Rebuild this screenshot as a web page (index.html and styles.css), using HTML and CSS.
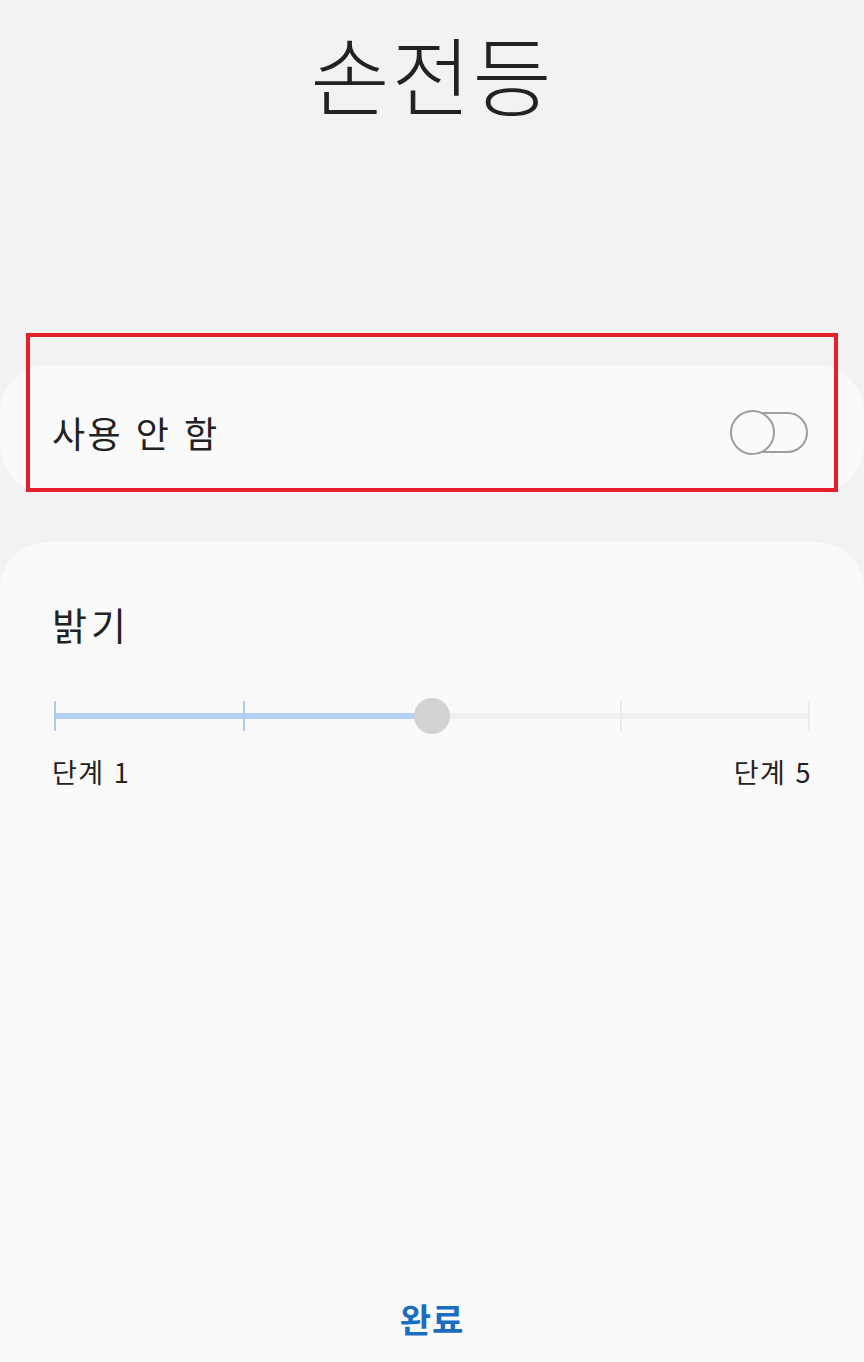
FILE: index.html
```html
<!DOCTYPE html>
<html lang="ko">
<head>
<meta charset="utf-8">
<link rel="stylesheet" href="styles.css">
</head>
<body>
<div class="page">
  <header class="header">
    <h1 class="title">손전등</h1>
  </header>
  <section class="card toggle-card">
    <span class="toggle-label">사용 안 함</span>
    <span class="switch"><span class="knob"></span></span>
  </section>
  <section class="card bright-card">
    <h2 class="bright-title">밝기</h2>
    <div class="slider">
      <div class="track"></div>
      <div class="track-active"></div>
      <span class="tick on t1"></span>
      <span class="tick on t2"></span>
      <span class="tick t4"></span>
      <span class="tick t5"></span>
      <span class="thumb"></span>
    </div>
    <div class="labels">
      <span>단계 1</span>
      <span>단계 5</span>
    </div>
    <div class="spacer"></div>
    <div class="done">완료</div>
  </section>
  <div class="highlight"></div>
</div>
</body>
</html>
```

FILE: styles.css
```css
html, body {
  margin: 0;
  padding: 0;
}
body {
  background: #f2f2f2;
  font-family: "Noto Sans CJK KR", "Noto Sans", sans-serif;
  color: #1f1f1f;
}
.page {
  position: relative;
  width: 864px;
  height: 1362px;
  overflow: hidden;
  display: flex;
  flex-direction: column;
}
.header {
  height: 365px;
  display: flex;
  justify-content: center;
}
.title {
  margin: 18px 0 0;
  font-size: 86px;
  font-weight: 300;
  line-height: 110px;
  color: #222;
  letter-spacing: 2px;
}
.card {
  background: #fafafa;
  border-radius: 48px;
}
.toggle-card {
  height: 128px;
  display: flex;
  align-items: center;
  justify-content: space-between;
  padding: 6px 56px 0 52px;
  box-sizing: border-box;
}
.toggle-label {
  font-size: 36px;
  line-height: 1;
  color: #222;
  letter-spacing: 2.5px;
}
.switch {
  position: relative;
  width: 77px;
  height: 41px;
  box-sizing: border-box;
  border: 2px solid #9e9e9e;
  border-radius: 21px;
}
.knob {
  position: absolute;
  left: -3px;
  top: -4px;
  width: 45px;
  height: 45px;
  box-sizing: border-box;
  border: 2px solid #9e9e9e;
  border-radius: 50%;
  background: #fafafa;
}
.bright-card {
  margin-top: 49px;
  flex: 1;
  border-radius: 48px 48px 0 0;
  padding: 56px 52px 0;
  display: flex;
  flex-direction: column;
}
.bright-title {
  margin: 0;
  font-size: 38px;
  font-weight: 400;
  line-height: 52px;
  color: #222;
  letter-spacing: 4px;
}
.slider {
  position: relative;
  margin: 48px 0 0 2px;
  width: 756px;
  height: 36px;
}
.track {
  position: absolute;
  left: 0;
  right: 0;
  top: 15px;
  height: 6px;
  background: #efefef;
}
.track-active {
  position: absolute;
  left: 0;
  width: 378px;
  top: 15px;
  height: 6px;
  background: #b3d2f3;
}
.tick {
  position: absolute;
  top: 3px;
  width: 2px;
  height: 30px;
  background: #ebebeb;
  margin-left: -1px;
}
.tick.on {
  background: #a9ccf0;
}
.t1 { left: 1px; }
.t2 { left: 190px; }
.t4 { left: 567px; }
.t5 { left: 755px; }
.thumb {
  position: absolute;
  left: 360px;
  top: 0;
  width: 36px;
  height: 36px;
  border-radius: 50%;
  background: #d3d3d3;
}
.labels {
  margin-top: 20px;
  width: 760px;
  display: flex;
  justify-content: space-between;
  font-size: 27px;
  line-height: 36px;
  color: #222;
  letter-spacing: 1.5px;
}
.spacer {
  flex: 1;
}
.done {
  align-self: center;
  font-size: 34px;
  font-weight: 700;
  line-height: 44px;
  color: #1a6ebf;
  padding-bottom: 21px;
  letter-spacing: 1px;
}
.highlight {
  position: absolute;
  left: 26px;
  top: 333px;
  width: 812px;
  height: 159px;
  box-sizing: border-box;
  border: 4px solid #e3202b;
}
```
